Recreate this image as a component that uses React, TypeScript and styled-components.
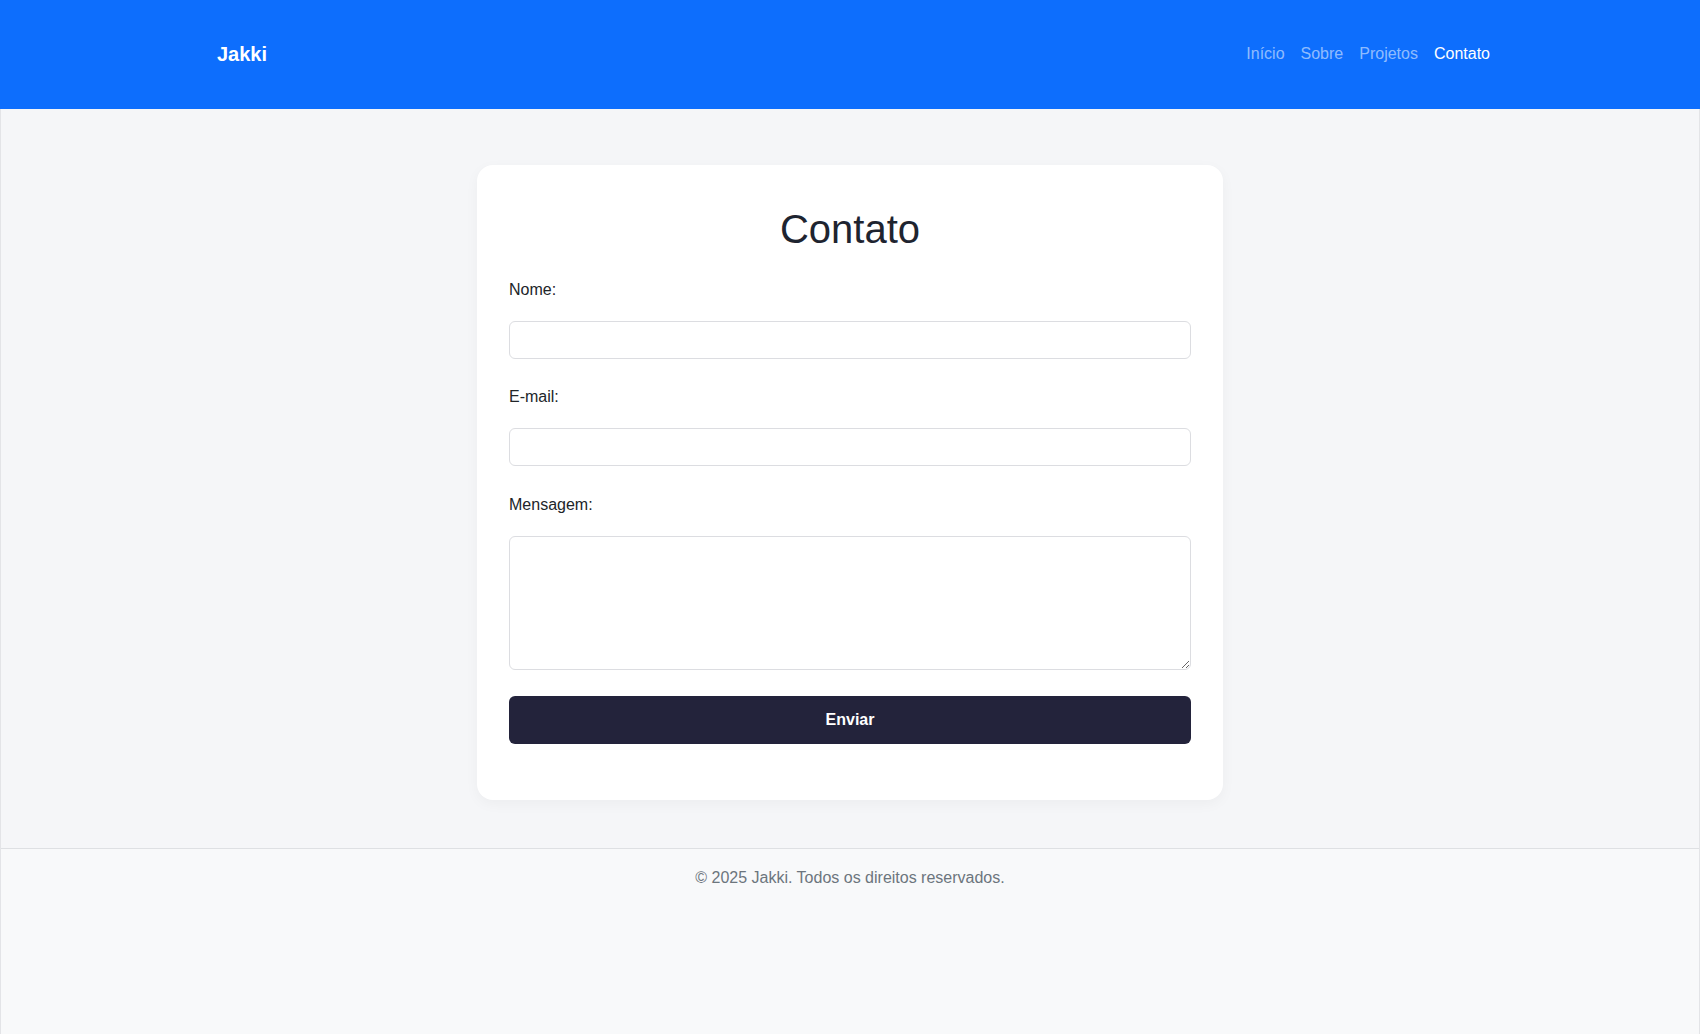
import React from "react";
import styled, { createGlobalStyle } from "styled-components";

const GlobalStyle = createGlobalStyle`
  * { box-sizing: border-box; }
  html, body { margin: 0; padding: 0; }
  body {
    font-family: "Liberation Sans", Arial, sans-serif;
    font-size: 16px;
    color: #212529;
    background: #f5f6f8;
  }
`;

const Page = styled.div`
  min-height: 100vh;
  display: flex;
  flex-direction: column;
`;

const Header = styled.header`
  height: 109px;
  background: #0d6efd;
  display: flex;
  align-items: center;
`;

const HeaderInner = styled.div`
  width: 100%;
  padding: 0 210px 1px 217px;
  display: flex;
  align-items: center;
  justify-content: space-between;
`;

const Brand = styled.a`
  color: #ffffff;
  font-weight: 700;
  font-size: 20px;
  text-decoration: none;
`;

const Nav = styled.nav`
  display: flex;
  gap: 16px;
`;

const NavLink = styled.a<{ $active?: boolean }>`
  color: ${(p) => (p.$active ? "#ffffff" : "rgba(255,255,255,0.55)")};
  font-size: 16px;
  text-decoration: none;
`;

const Body = styled.div`
  flex: 1;
  display: flex;
  flex-direction: column;
  border-left: 1px solid #e3e4e7;
  border-right: 1px solid #e3e4e7;
`;

const Main = styled.main`
  padding: 56px 0 48px;
  display: flex;
  justify-content: center;
  background: #f5f6f8;
`;

const Card = styled.section`
  width: 746px;
  background: #ffffff;
  border-radius: 16px;
  padding: 41px 32px 56px;
  box-shadow: 0 4px 14px rgba(0, 0, 0, 0.04);
`;

const Title = styled.h2`
  margin: 0 0 29px;
  text-align: center;
  font-size: 40px;
  font-weight: 400;
  line-height: 46px;
  color: #1e2430;
`;

const Form = styled.form`
  display: flex;
  flex-direction: column;
`;

const Field = styled.div<{ $gap: number }>`
  display: flex;
  flex-direction: column;
  margin-bottom: ${(p) => p.$gap}px;
`;

const Label = styled.label`
  display: block;
  font-size: 16px;
  line-height: 18px;
  color: #212529;
  margin-bottom: 22px;
`;

const Input = styled.input`
  display: block;
  width: 100%;
  height: 38px;
  border: 1px solid #dcdde1;
  border-radius: 6px;
  padding: 8px 12px;
  font-family: inherit;
  font-size: 16px;
  background: #fff;
  outline: none;
`;

const TextArea = styled.textarea`
  display: block;
  width: 100%;
  height: 134px;
  border: 1px solid #dcdde1;
  border-radius: 6px;
  padding: 8px 12px;
  font-family: inherit;
  font-size: 16px;
  resize: vertical;
  background: #fff;
  outline: none;
`;

const Button = styled.button`
  height: 48px;
  width: 100%;
  border: none;
  border-radius: 6px;
  background: #23233b;
  color: #ffffff;
  font-family: inherit;
  font-weight: 700;
  font-size: 16px;
  cursor: pointer;
`;

const Footer = styled.footer`
  flex: 1;
  border-top: 1px solid #dee0e3;
  background: #f8f9fa;
  padding: 20px 0;
  text-align: center;
  color: #6c757d;
  font-size: 16px;
  line-height: 18px;
`;

export default function App() {
  return (
    <Page>
      <GlobalStyle />
      <Header>
        <HeaderInner>
          <Brand href="#">Jakki</Brand>
          <Nav>
            <NavLink href="#">Início</NavLink>
            <NavLink href="#">Sobre</NavLink>
            <NavLink href="#">Projetos</NavLink>
            <NavLink href="#" $active>
              Contato
            </NavLink>
          </Nav>
        </HeaderInner>
      </Header>
      <Body>
        <Main>
          <Card>
            <Title>Contato</Title>
            <Form onSubmit={(e) => e.preventDefault()}>
              <Field $gap={29}>
                <Label htmlFor="nome">Nome:</Label>
                <Input id="nome" type="text" />
              </Field>
              <Field $gap={30}>
                <Label htmlFor="email">E-mail:</Label>
                <Input id="email" type="email" />
              </Field>
              <Field $gap={26}>
                <Label htmlFor="mensagem">Mensagem:</Label>
                <TextArea id="mensagem" />
              </Field>
              <Button type="submit">Enviar</Button>
            </Form>
          </Card>
        </Main>
        <Footer>© 2025 Jakki. Todos os direitos reservados.</Footer>
      </Body>
    </Page>
  );
}
